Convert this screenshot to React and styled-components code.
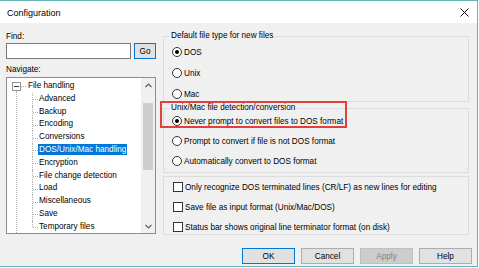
import styled, { createGlobalStyle } from "styled-components";

const GlobalStyle = createGlobalStyle`
  html, body { margin: 0; padding: 0; background: #fff; }
  body { font-family: "Liberation Sans", Arial, sans-serif; }
  * { box-sizing: border-box; }
`;

const Window = styled.div`
  position: relative;
  width: 478px;
  height: 267px;
  border-top: 1px solid #62b6b8;
  border-right: 1px solid #62b6b8;
  border-bottom: 1px solid #62b6b8;
  display: flex;
  flex-direction: column;
  font-size: 8.2px;
  color: #000;
`;

const TitleBar = styled.div`
  height: 22px;
  flex-shrink: 0;
  background: #fff;
  display: flex;
  align-items: center;
  justify-content: space-between;
  padding: 1px 8px 0 7px;
  font-size: 9px;
`;

const Body = styled.div`
  flex: 1;
  background: #f0f0f0;
  padding: 9px 8px 2px 6px;
  display: flex;
  flex-direction: column;
`;

const Main = styled.div`
  display: flex;
  gap: 7px;
`;

const LeftCol = styled.div`
  width: 150px;
  display: flex;
  flex-direction: column;
`;

const Label = styled.div`
  line-height: 10px;
  height: 10px;
  margin-top: ${(p) => p.$mt || 0}px;
`;

const InputRow = styled.div`
  display: flex;
  gap: 3px;
  margin-top: 1px;
`;

const TextInput = styled.div`
  width: 125px;
  height: 16px;
  background: #fff;
  border: 1px solid #7a7a7a;
`;

const Button = styled.div`
  width: ${(p) => p.$w || 53}px;
  height: 16px;
  display: flex;
  align-items: center;
  justify-content: center;
  background: ${(p) => (p.$disabled ? "#cccccc" : "#e1e1e1")};
  border: 1px solid
    ${(p) => (p.$default ? "#0078d7" : p.$disabled ? "#bfbfbf" : "#adadad")};
  color: ${(p) => (p.$disabled ? "#838383" : "#000")};
`;

const Tree = styled.div`
  margin-top: 2px;
  height: 157px;
  border: 1px solid #8a8d92;
  display: flex;
  background: #fff;
`;

const TreeList = styled.div`
  position: relative;
  flex: 1;
  padding-top: 2px;
  &::before {
    content: "";
    position: absolute;
    left: 9px;
    top: 13px;
    bottom: 0;
    border-left: 1px dotted #b0b0b0;
  }
`;

const Row = styled.div`
  position: relative;
  height: 12.8px;
  line-height: 12.8px;
  white-space: nowrap;
  padding-left: ${(p) => (p.$top ? 20 : 31)}px;
  ${(p) =>
    !p.$top &&
    `
    &::before {
      content: "";
      position: absolute;
      left: 25px;
      top: 0;
      height: ${p.$last ? "50%" : "100%"};
      border-left: 1px dotted #b0b0b0;
    }
    &::after {
      content: "";
      position: absolute;
      left: 26px;
      top: 50%;
      width: 5px;
      border-top: 1px dotted #b0b0b0;
    }
  `}
`;

const Expander = styled.span`
  position: absolute;
  left: 5px;
  top: 2px;
  width: 9px;
  height: 9px;
  border: 1px solid #919191;
  background: #fff;
  &::before {
    content: "";
    position: absolute;
    left: 1px;
    right: 1px;
    top: 3px;
    border-top: 1px solid #333;
  }
  &::after {
    content: "";
    position: absolute;
    left: 8px;
    top: 3px;
    width: 5px;
    border-top: 1px dotted #b0b0b0;
  }
`;

const ItemText = styled.span`
  display: inline-block;
  padding: 0 1px;
  line-height: 11px;
  background: ${(p) => (p.$selected ? "#0078d7" : "transparent")};
  color: ${(p) => (p.$selected ? "#fff" : "#000")};
`;

const ScrollBar = styled.div`
  width: 14px;
  background: #f0f0f0;
  display: flex;
  flex-direction: column;
`;

const ScrollArrow = styled.div`
  height: 14px;
  display: flex;
  align-items: center;
  justify-content: center;
`;

const ScrollTrack = styled.div`
  flex: 1;
  padding: 11px 2px 0;
`;

const Thumb = styled.div`
  height: 67px;
  background: #cdcdcd;
`;

const RightCol = styled.div`
  flex: 1;
  margin-top: -1px;
  display: flex;
  flex-direction: column;
`;

const Group = styled.fieldset`
  margin: ${(p) => p.$mt || 0}px 0 0;
  padding: ${(p) => p.$pt}px 0 ${(p) => p.$pb}px 8px;
  border: 1px solid #dcdcdc;
  min-width: 0;
  display: flex;
  flex-direction: column;
  gap: ${(p) => p.$gap}px;
`;

const Legend = styled.legend`
  padding: 0 2px;
  margin-left: -3px;
  line-height: 10px;
  font-size: 8.2px;
`;

const Option = styled.div`
  display: flex;
  align-items: center;
  gap: 2px;
  height: 12px;
  white-space: nowrap;
`;

const Radio = styled.span`
  width: 10px;
  height: 10px;
  border-radius: 50%;
  border: 1px solid #333;
  background: #fff;
  display: flex;
  align-items: center;
  justify-content: center;
  &::after {
    content: "";
    width: 4px;
    height: 4px;
    border-radius: 50%;
    background: ${(p) => (p.$checked ? "#000" : "transparent")};
  }
`;

const Check = styled.span`
  width: 10px;
  height: 10px;
  margin-left: 1px;
  border: 1px solid #333;
  background: #fff;
`;

const Footer = styled.div`
  margin-top: auto;
  margin-right: -3px;
  display: flex;
  justify-content: flex-end;
  gap: 6px;
`;

const Highlight = styled.div`
  position: absolute;
  left: 160px;
  top: 100px;
  width: 187px;
  height: 27px;
  border: 2px solid #e3403b;
  pointer-events: none;
`;

const Chevron = ({ up }) => (
  <svg width="7" height="5" viewBox="0 0 7 5">
    <polyline
      points={up ? "0.5,4 3.5,1 6.5,4" : "0.5,1 3.5,4 6.5,1"}
      fill="none"
      stroke="#606060"
      strokeWidth="1.2"
    />
  </svg>
);

const children = [
  "Advanced",
  "Backup",
  "Encoding",
  "Conversions",
  "DOS/Unix/Mac handling",
  "Encryption",
  "File change detection",
  "Load",
  "Miscellaneous",
  "Save",
  "Temporary files",
];

export default function App() {
  return (
    <>
      <GlobalStyle />
      <Window>
        <TitleBar>
          <span>Configuration</span>
          <svg width="9" height="9" viewBox="0 0 9 9">
            <path d="M0.5 0.5 L8.5 8.5 M8.5 0.5 L0.5 8.5" stroke="#111" strokeWidth="1" />
          </svg>
        </TitleBar>
        <Body>
          <Main>
            <LeftCol>
              <Label>Find:</Label>
              <InputRow>
                <TextInput />
                <Button $w={22} $default>
                  Go
                </Button>
              </InputRow>
              <Label $mt={6}>Navigate:</Label>
              <Tree>
                <TreeList>
                  <Row $top>
                    <Expander />
                    <ItemText>File handling</ItemText>
                  </Row>
                  {children.map((c, i) => (
                    <Row key={c} $last={i === children.length - 1}>
                      <ItemText $selected={c === "DOS/Unix/Mac handling"}>{c}</ItemText>
                    </Row>
                  ))}
                </TreeList>
                <ScrollBar>
                  <ScrollArrow>
                    <Chevron up />
                  </ScrollArrow>
                  <ScrollTrack>
                    <Thumb />
                  </ScrollTrack>
                  <ScrollArrow>
                    <Chevron />
                  </ScrollArrow>
                </ScrollBar>
              </Tree>
            </LeftCol>
            <RightCol>
              <Group $pt={5} $pb={1} $gap={9}>
                <Legend>Default file type for new files</Legend>
                <Option>
                  <Radio $checked />
                  DOS
                </Option>
                <Option>
                  <Radio />
                  Unix
                </Option>
                <Option>
                  <Radio />
                  Mac
                </Option>
              </Group>
              <Group $mt={1} $pt={2} $pb={5} $gap={8}>
                <Legend>Unix/Mac file detection/conversion</Legend>
                <Option>
                  <Radio $checked />
                  Never prompt to convert files to DOS format
                </Option>
                <Option>
                  <Radio />
                  Prompt to convert if file is not DOS format
                </Option>
                <Option>
                  <Radio />
                  Automatically convert to DOS format
                </Option>
              </Group>
              <Group $mt={3} $pt={4} $pb={1} $gap={8}>
                <Option>
                  <Check />
                  Only recognize DOS terminated lines (CR/LF) as new lines for editing
                </Option>
                <Option>
                  <Check />
                  Save file as input format (Unix/Mac/DOS)
                </Option>
                <Option>
                  <Check />
                  Status bar shows original line terminator format (on disk)
                </Option>
              </Group>
            </RightCol>
          </Main>
          <Footer>
            <Button $default>OK</Button>
            <Button>Cancel</Button>
            <Button $disabled>Apply</Button>
            <Button>Help</Button>
          </Footer>
        </Body>
        <Highlight />
      </Window>
    </>
  );
}
